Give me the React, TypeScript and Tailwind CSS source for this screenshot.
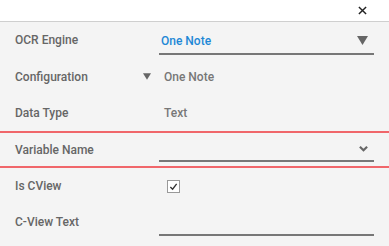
import React from 'react';

function Tri({ className }: { className: string }) {
  return (
    <svg viewBox="0 0 10 8" className={className}>
      <path d="M0 0 H10 L5 8 Z" fill="currentColor" />
    </svg>
  );
}

export default function App() {
  const label = "w-[159px] shrink-0 pl-[15px] text-[12px] font-medium text-[#666]";
  return (
    <div className="w-[389px] h-[246px] bg-[#f4f4f4] overflow-hidden" style={{ fontFamily: 'Roboto, "Liberation Sans", sans-serif' }}>
      {/* Header */}
      <div className="h-[22px] bg-white border-b border-[#cfcfcf] flex items-center justify-end pr-[22px]">
        <svg viewBox="0 0 10 10" className="w-[9px] h-[9px] text-[#222]">
          <path d="M1 1 L9 9 M9 1 L1 9" stroke="currentColor" strokeWidth="1.6" />
        </svg>
      </div>

      {/* OCR Engine */}
      <div className="h-[36px] flex items-center">
        <div className={label}>OCR Engine</div>
        <div className="w-[215px] h-[26px] mt-[3px] border-b-2 border-[#777] flex items-center justify-between pl-[2px] pr-[6px]">
          <span className="text-[12px] font-medium text-[#1e88d6]">One Note</span>
          <Tri className="w-[11px] h-[9px] text-[#666]" />
        </div>
      </div>

      {/* Configuration */}
      <div className="h-[37px] flex items-center">
        <div className={label}>Configuration</div>
        <Tri className="w-[8px] h-[7px] text-[#666] -ml-[16px]" />
        <span className="ml-[13px] text-[12px] font-medium text-[#777]">One Note</span>
      </div>

      {/* Data Type */}
      <div className="h-[36px] flex items-center">
        <div className={label}>Data Type</div>
        <span className="ml-[5px] text-[12px] font-medium text-[#777]">Text</span>
      </div>

      {/* Variable Name */}
      <div className="h-[37px] flex items-center border-y-2 border-[#f0666a]">
        <div className={label}>Variable Name</div>
        <div className="w-[215px] h-[24px] border-b-2 border-[#777] flex items-center justify-end pr-[6px]">
          <svg viewBox="0 0 10 7" className="w-[9px] h-[7px] text-[#666]">
            <path d="M1 1.5 L5 5.5 L9 1.5" stroke="currentColor" strokeWidth="2.4" fill="none" />
          </svg>
        </div>
      </div>

      {/* Is CView */}
      <div className="h-[36px] flex items-center">
        <div className={label}>Is CView</div>
        <div className="ml-[8px] w-[13px] h-[13px] border border-[#999] bg-white flex items-center justify-center">
          <svg viewBox="0 0 10 10" className="w-[9px] h-[9px] text-[#333]">
            <path d="M1.5 5.5 L4 8 L8.5 2" stroke="currentColor" strokeWidth="1.5" fill="none" />
          </svg>
        </div>
      </div>

      {/* C-View Text */}
      <div className="h-[36px] flex items-center">
        <div className={label}>C-View Text</div>
        <div className="w-[215px] h-[24px] mt-[4px] border-b-2 border-[#777]" />
      </div>
    </div>
  );
}
